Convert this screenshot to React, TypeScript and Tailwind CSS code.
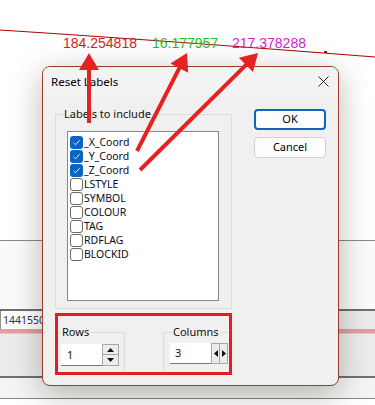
import React from "react";

const items: { label: string; checked: boolean }[] = [
  { label: "_X_Coord", checked: true },
  { label: "_Y_Coord", checked: true },
  { label: "_Z_Coord", checked: true },
  { label: "LSTYLE", checked: false },
  { label: "SYMBOL", checked: false },
  { label: "COLOUR", checked: false },
  { label: "TAG", checked: false },
  { label: "RDFLAG", checked: false },
  { label: "BLOCKID", checked: false },
];

function Arrow({ x1, y1, x2, y2 }: { x1: number; y1: number; x2: number; y2: number }) {
  const dx = x2 - x1;
  const dy = y2 - y1;
  const len = Math.hypot(dx, dy);
  const ux = dx / len;
  const uy = dy / len;
  const hl = 17;
  const hw = 10;
  const bx = x2 - ux * hl;
  const by = y2 - uy * hl;
  const px = -uy;
  const py = ux;
  const pts = `${x2},${y2} ${bx + px * hw},${by + py * hw} ${bx - px * hw},${by - py * hw}`;
  return (
    <g>
      <line x1={x1} y1={y1} x2={bx + ux * 2} y2={by + uy * 2} stroke="#e42222" strokeWidth={4} />
      <polygon points={pts} fill="#e42222" />
    </g>
  );
}

function CheckBox({ checked }: { checked: boolean }) {
  if (checked) {
    return (
      <div className="w-[13px] h-[13px] rounded-[3px] bg-[#0a64c2] flex items-center justify-center shrink-0">
        <svg width="9" height="9" viewBox="0 0 9 9">
          <path d="M1.5 4.8 L3.6 6.8 L7.6 2.2" fill="none" stroke="#dbe8f7" strokeWidth="1" />
        </svg>
      </div>
    );
  }
  return <div className="w-[13px] h-[13px] rounded-[3px] border border-[#6a6a6a] bg-white shrink-0" />;
}

export default function App() {
  return (
    <div className="relative w-[375px] h-[405px] overflow-hidden bg-white" style={{ fontFamily: '"Noto Sans", "Liberation Sans", sans-serif' }}>
      {/* background application strips */}
      <div className="flex flex-col w-full h-full">
        <div className="h-[240px] bg-white" />
        <div className="h-px bg-[#8a8a8a]" />
        <div className="h-[68px] bg-[#fafafa]" />
        <div className="h-[2px] bg-[#6e6e6e]" />
        <div className="h-[18px] flex">
          <div className="w-[60px] bg-white border-l border-[#909090] text-[10.5px] leading-[18px] text-[#333] pl-[2px]">1441550</div>
          <div className="flex-1 bg-[#ebebeb]" />
        </div>
        <div className="h-[4px] bg-[#e89c9c]" />
        <div className="h-px bg-[#cfcfcf]" />
        <div className="h-[42px] bg-[#ececec]" />
        <div className="h-[2px] bg-[#707070]" />
        <div className="h-[20px] bg-[#f4f4f4]" />
        <div className="h-px bg-[#858585]" />
        <div className="flex-1 bg-white" />
      </div>

      {/* CAD drawing: polyline and coordinate labels */}
      <svg className="absolute left-0 top-0" width="375" height="80">
        <path d="M0 30 Q 170 41 375 57" fill="none" stroke="#b00000" strokeWidth="1" />
        <rect x="324" y="51" width="3" height="2" fill="#b00000" />
      </svg>
      <div className="absolute left-[63px] top-[34px] text-[14px] leading-[18px] text-[#cc1f1f]" style={{ fontFamily: '"Liberation Sans", Arial, sans-serif' }}>184.254818</div>
      <div className="absolute left-[152px] top-[34px] text-[14px] leading-[18px] text-[#1fc21f]" style={{ fontFamily: '"Liberation Sans", Arial, sans-serif' }}>16.177957</div>
      <div className="absolute left-[232px] top-[34px] text-[14px] leading-[18px] text-[#d21fd2]" style={{ fontFamily: '"Liberation Sans", Arial, sans-serif' }}>217.378288</div>

      {/* dialog window */}
      <div className="absolute left-[42px] top-[66px] w-[297px] h-[320px] rounded-[8px] border border-[#9c3b2a] bg-[#f0f0f0] shadow-[0_8px_32px_rgba(0,0,0,0.28)] overflow-hidden text-[#111]">
        <div className="h-[29px] flex items-center justify-between pl-[8px] pr-[9px] bg-[#f3f3f3]">
          <span className="text-[11.5px] text-black">Reset Labels</span>
          <svg width="11" height="11" viewBox="0 0 11 11">
            <path d="M0.5 0.5 L10.5 10.5 M10.5 0.5 L0.5 10.5" stroke="#222" strokeWidth="1" />
          </svg>
        </div>
        <div className="flex pl-[12px]">
          <div className="flex flex-col pt-[18px]">
            <div className="relative w-[177px] h-[195px] border border-[#dcdcdc] pl-[11px] pt-[16px]">
              <span className="absolute left-[7px] -top-[9px] px-[1px] bg-[#f0f0f0] text-[11px] leading-[16px]">Labels to include</span>
              <div className="w-[152px] h-[170px] border border-[#828790] bg-white pt-[3px] pl-[2px]">
                {items.map((it) => (
                  <div key={it.label} className="h-[14px] flex items-center gap-[1px]">
                    <CheckBox checked={it.checked} />
                    <span className="text-[10.5px] leading-[14px] text-[#0c0c24]">{it.label}</span>
                  </div>
                ))}
              </div>
            </div>
            <div className="mt-[4px] w-[177px] h-[62px] border-[3px] border-[#e41e1e] flex pt-[16px]">
              <div className="relative w-[67px] border-t border-r border-[#dcdcdc] pl-[3px] pt-[11px] flex items-start">
                <span className="absolute left-[3px] -top-[9px] px-[1px] bg-[#f0f0f0] text-[11px] leading-[16px]">Rows</span>
                <div className="w-[41px] h-[22px] bg-white border-b border-[#7a7a7a] text-[11px] leading-[21px] pl-[6px]">1</div>
                <div className="w-[17px] h-[22px] flex flex-col">
                  <div className="h-[11px] border border-[#a8a8a8] bg-[#ececec] flex items-center justify-center">
                    <svg width="7" height="4" viewBox="0 0 7 4"><path d="M0 4 L3.5 0 L7 4 Z" fill="#111" /></svg>
                  </div>
                  <div className="h-[11px] border border-t-0 border-[#a8a8a8] bg-[#ececec] flex items-center justify-center">
                    <svg width="7" height="4" viewBox="0 0 7 4"><path d="M0 0 L3.5 4 L7 0 Z" fill="#111" /></svg>
                  </div>
                </div>
              </div>
              <div className="w-[38px]" />
              <div className="relative flex-1 border-t border-l border-[#dcdcdc] pl-[6px] pt-[10px] flex items-start">
                <span className="absolute left-[8px] -top-[9px] px-[1px] bg-[#f0f0f0] text-[11px] leading-[16px]">Columns</span>
                <div className="w-[41px] h-[21px] bg-white border-b border-[#7a7a7a] text-[11px] leading-[20px] pl-[5px]">3</div>
                <div className="w-[17px] h-[21px] flex">
                  <div className="w-[9px] border border-[#a8a8a8] bg-[#ececec] flex items-center justify-center">
                    <svg width="4" height="7" viewBox="0 0 4 7"><path d="M4 0 L0 3.5 L4 7 Z" fill="#111" /></svg>
                  </div>
                  <div className="w-[8px] border border-l-0 border-[#a8a8a8] bg-[#ececec] flex items-center justify-center">
                    <svg width="4" height="7" viewBox="0 0 4 7"><path d="M0 0 L4 3.5 L0 7 Z" fill="#111" /></svg>
                  </div>
                </div>
              </div>
            </div>
          </div>
          <div className="ml-[22px] pt-[13px] flex flex-col gap-[7px]">
            <div className="w-[72px] h-[21px] rounded-[4px] border-2 border-[#0a64c2] bg-[#fdfdfd] flex items-center justify-center text-[11px] text-black">OK</div>
            <div className="w-[72px] h-[21px] rounded-[4px] border border-[#d0d0d0] bg-[#fdfdfd] flex items-center justify-center text-[11px] text-black">Cancel</div>
          </div>
        </div>
      </div>

      {/* annotation arrows */}
      <svg className="absolute left-0 top-0 pointer-events-none" width="375" height="405">
        <Arrow x1={89} y1={123} x2={89} y2={53} />
        <Arrow x1={137} y1={151} x2={187} y2={53} />
        <Arrow x1={140} y1={170} x2={258} y2={53} />
      </svg>
    </div>
  );
}
